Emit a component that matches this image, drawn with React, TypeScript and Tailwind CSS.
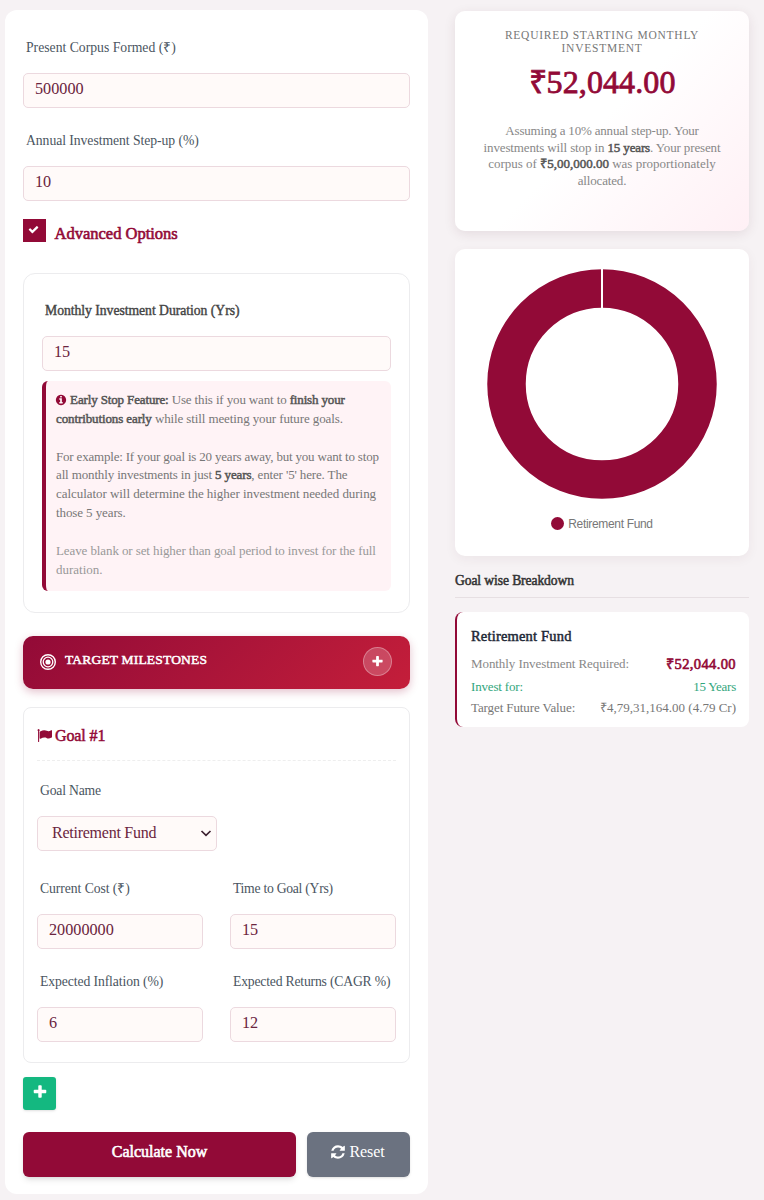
import React from 'react'
import { useState } from 'react'

const Icon = ({ d, className }: { d: string; className: string }) => (
  <svg viewBox="0 0 1792 1792" fill="currentColor" className={className}>
    <path d={d} />
  </svg>
)

const plus = 'M1600 736v192q0 40-28 68t-68 28h-416v416q0 40-28 68t-68 28h-192q-40 0-68-28t-28-68v-416h-416q-40 0-68-28t-28-68v-192q0-40 28-68t68-28h416v-416q0-40 28-68t68-28h192q40 0 68 28t28 68v416h416q40 0 68 28t28 68z'
const check = 'M1671 566q0 40-28 68l-724 724-136 136q-28 28-68 28t-68-28l-136-136-362-362q-28-28-28-68t28-68l136-136q28-28 68-28t68 28l294 295 656-657q28-28 68-28t68 28l136 136q28 28 28 68z'
const info = 'M1152 1376v-160q0-14-9-23t-23-9h-96v-512q0-14-9-23t-23-9h-320q-14 0-23 9t-9 23v160q0 14 9 23t23 9h96v320h-96q-14 0-23 9t-9 23v160q0 14 9 23t23 9h448q14 0 23-9t9-23zm-128-896v-160q0-14-9-23t-23-9h-192q-14 0-23 9t-9 23v160q0 14 9 23t23 9h192q14 0 23-9t9-23zm640 416q0 209-103 385.5t-279.5 279.5-385.5 103-385.5-103-279.5-279.5-103-385.5 103-385.5 279.5-279.5 385.5-103 385.5 103 279.5 279.5 103 385.5z'
const flag = 'M320 256q0 72-64 110v1266q0 13-9.5 22.5t-22.5 9.5h-64q-13 0-22.5-9.5t-9.5-22.5v-1266q-64-38-64-110 0-53 37.5-90.5t90.5-37.5 90.5 37.5 37.5 90.5zm1472 64v763q0 25-12.5 38.5t-39.5 27.5q-215 116-369 116-61 0-123.5-22t-108.5-48-115.5-48-142.5-22q-192 0-464 146-17 9-33 9-26 0-45-19t-19-45v-742q0-32 31-55 21-14 79-43 236-120 421-120 107 0 200 29t219 88q38 19 88 19 54 0 117.5-21t110-47 88-47 54.5-21q26 0 45 19t19 45z'
const refresh = 'M1639 1056q0 5-1 7-64 268-268 434.5t-478 166.5q-146 0-282.5-55t-243.5-157l-129 129q-19 19-45 19t-45-19-19-45v-448q0-26 19-45t45-19h448q26 0 45 19t19 45-19 45l-137 137q71 66 161 102t187 36q134 0 250-65t186-179q11-17 53-117 8-23 30-23h192q13 0 22.5 9.5t9.5 22.5zm25-800v448q0 26-19 45t-45 19h-448q-26 0-45-19t-19-45 19-45l138-138q-148-137-349-137-134 0-250 65t-186 179q-11 17-53 117-8 23-30 23h-199q-13 0-22.5-9.5t-9.5-22.5v-7q65-268 270-434.5t480-166.5q146 0 284 55.5t245 156.5l130-129q19-19 45-19t45 19 19 45z'

const Bullseye = () => (
  <svg viewBox="0 0 16 16" className="size-4" fill="none" stroke="currentColor">
    <circle cx="8" cy="8" r="7.3" strokeWidth="1.4" />
    <circle cx="8" cy="8" r="4.8" strokeWidth="1.3" />
    <circle cx="8" cy="8" r="2.6" fill="currentColor" stroke="none" />
  </svg>
)

// bold without changing the letter widths
const B = ({ children }: { children: React.ReactNode }) => (
  <b className="font-normal text-[#555] [-webkit-text-stroke:0.5px_#555]">{children}</b>
)

const Field = ({ label, start, className = 'text-[#4a5561]' }: { label: string; start: string; className?: string }) => {
  const [value, setValue] = useState(start)
  return (
    <label className="block">
      <span className={`block h-5 pl-[3px] text-[13.7px] leading-[21px] whitespace-nowrap ${className}`}>{label}</span>
      <input
        value={value}
        onChange={(e) => setValue(e.target.value)}
        className="mt-4 block h-[35px] w-full rounded-[5px] border border-[#ecd9df] bg-[#fffaf9] px-[11px] pb-[2px] text-[16.2px] text-[#6b2540]"
      />
    </label>
  )
}

const Advanced = () => (
  <section className="mt-[30px] h-[340px] rounded-xl border border-[#ececee] px-[18px] pt-[26px]">
    <Field label="Monthly Investment Duration (Yrs)" start="15" className="tracking-[-0.04px] text-[#444] [-webkit-text-stroke:0.4px_#444]" />
    <div className="mt-[10px] h-[210px] rounded-md border-l-4 border-[#920a37] bg-[#fff3f6] pt-[10px] pl-[10px] text-[13px] leading-[18.85px] whitespace-nowrap text-[#777]">
      <p className="tracking-[-0.14px]"><Icon d={info} className="-mt-[2px] -ml-px inline size-3 text-[#920a37]" /><B> Early Stop Feature:</B> Use this if you want to <B>finish your</B></p>
      <p className="tracking-[-0.11px]"><B>contributions early</B> while still meeting your future goals.</p>
      <br />
      <p className="tracking-[-0.19px]">For example: If your goal is 20 years away, but you want to stop</p>
      <p className="tracking-[-0.14px]">all monthly investments in just <B>5 years</B>, enter '5' here. The</p>
      <p className="tracking-[-0.05px]">calculator will determine the higher investment needed during</p>
      <p className="tracking-[-0.1px]">those 5 years.</p>
      <br />
      <p className="tracking-[-0.1px] text-[#999]">Leave blank or set higher than goal period to invest for the full</p>
      <p className="text-[#999]">duration.</p>
    </div>
  </section>
)

const Goal = () => (
  <section className="mt-[18px] h-[356px] rounded-lg border border-[#ececee] px-[13px]">
    <h3 className="flex h-[53px] items-center gap-[3px] border-b border-dashed border-[#eee] pt-[3px] text-[16px] tracking-[-0.1px] text-[#920a37] [-webkit-text-stroke:0.5px]">
      <Icon d={flag} className="size-[15px]" />
      <span>Goal #1</span>
    </h3>
    <div className="mt-[19px] h-5 pl-[3px] text-[13.7px] leading-[21px] tracking-[-0.2px] text-[#4a5561]">Goal Name</div>
    <div className="mt-4 flex h-[35px] w-[180px] items-center justify-between rounded-[5px] border border-[#ecd9df] bg-[#fffaf9] pr-[4px] pb-px pl-[14px] text-[16px] tracking-[-0.25px] text-[#6b2540]">
      <span>Retirement Fund</span>
      <svg viewBox="0 0 12 12" className="size-3" fill="none" stroke="#3c2030" strokeWidth="1.7"><path d="M1.500 4l4.500 4.300L10.500 4" /></svg>
    </div>
    <div className="mt-[27px] grid grid-cols-2 gap-x-[27px] gap-y-[22px]">
      <Field label="Current Cost (₹)" start="20000000" className="tracking-[-0.07px] text-[#4a5561]" />
      <Field label="Time to Goal (Yrs)" start="15" className="tracking-[-0.28px] text-[#4a5561]" />
      <Field label="Expected Inflation (%)" start="6" className="tracking-[-0.1px] text-[#4a5561]" />
      <Field label="Expected Returns (CAGR %)" start="12" className="tracking-[-0.2px] text-[#4a5561]" />
    </div>
  </section>
)

const Summary = () => (
  <section className="h-[220px] rounded-[10px] bg-linear-135 from-white from-50% to-[#fff0f5] pt-[18px] text-center whitespace-nowrap shadow-[0_3px_12px_rgba(80,30,50,0.10)]">
    <div className="text-[11.5px] leading-[12.5px] tracking-[0.75px] text-[#777]">
      <p>REQUIRED STARTING MONTHLY</p>
      <p>INVESTMENT</p>
    </div>
    <p className="mt-[10px] text-[32px] leading-9 tracking-[0.1px] text-[#920a37] [-webkit-text-stroke:0.8px]">₹52,044.00</p>
    <div className="mt-[23px] text-[13px] leading-[16.5px] text-[#888]">
      <p className="tracking-[-0.18px]">Assuming a 10% annual step-up. Your</p>
      <p className="tracking-[-0.13px]">investments will stop in <B>15 years</B>. Your present</p>
      <p>corpus of <B>₹5,00,000.00</B> was proportionately</p>
      <p className="tracking-[-0.15px]">allocated.</p>
    </div>
  </section>
)

const Chart = () => (
  <section className="mt-[18px] h-[307px] rounded-[10px] bg-white pt-[19.5px] shadow-[0_3px_12px_rgba(80,30,50,0.06)]">
    <svg viewBox="0 0 230 230" className="mx-auto size-[230px]">
      <circle cx="115" cy="115" r="95.500" fill="none" stroke="#920a37" strokeWidth="38.500" />
      <path d="M115 0v40" stroke="#fff" strokeWidth="2" />
    </svg>
    <div className="mt-[17px] flex items-center justify-center gap-[4px] font-['Liberation_Sans'] text-[12px] leading-4 tracking-[-0.33px] text-[#777]">
      <span className="size-[13px] rounded-full bg-[#920a37]" />
      <span>Retirement Fund</span>
    </div>
  </section>
)

const Breakdown = () => (
  <section className="whitespace-nowrap">
    <h2 className="mt-[14px] h-[28px] border-b border-[#e6dfe2] pt-px text-[13.6px] leading-5 tracking-[-0.1px] text-[#333] [-webkit-text-stroke:0.5px]">Goal wise Breakdown</h2>
    <div className="mt-[14px] h-[115px] rounded-lg border-l-[2.5px] border-[#920a37] bg-white pt-[14px] pr-[13px] pl-[14px] text-[13px]">
      <h3 className="text-[14.500px] leading-5 tracking-[0.18px] text-[#1f2937] [-webkit-text-stroke:0.5px]">Retirement Fund</h3>
      <div className="mt-[6px] flex h-[24px] items-center justify-between text-[#888]">
        <span className="tracking-[-0.08px]">Monthly Investment Required:</span>
        <span className="pt-[2px] text-[14.500px] tracking-[0.38px] text-[#920a37] [-webkit-text-stroke:0.6px]">₹52,044.00</span>
      </div>
      <div className="flex h-[22px] items-center justify-between text-[#32a67d]">
        <span className="tracking-[-0.18px]">Invest for:</span>
        <span className="tracking-[-0.25px]">15 Years</span>
      </div>
      <div className="flex h-[20px] items-center justify-between text-[#777]">
        <span className="tracking-[-0.1px]">Target Future Value:</span>
        <span>₹4,79,31,164.00 (4.79 Cr)</span>
      </div>
    </div>
  </section>
)

const App = () => {
  const [on, setOn] = useState(true)

  return (
    <div className="flex h-[1200px] w-[764px] items-start gap-[27px] overflow-hidden bg-[#f6f2f4] pt-[10px] pl-[5px] font-['Liberation_Serif',serif]">
      <main className="h-[1184px] w-[423px] rounded-xl bg-white px-[18px] pt-[27px]">
        <div className="flex flex-col gap-[22px]">
          <Field label="Present Corpus Formed (₹)" start="500000" />
          <Field label="Annual Investment Step-up (%)" start="10" className="tracking-[-0.06px] text-[#4a5561]" />
        </div>
        <div className="mt-[18px] flex h-[24px] gap-[8.5px]">
          <button onClick={() => setOn(!on)} className="flex size-[23px] items-start justify-center bg-[#920a37] pt-[5px] pr-[2px] text-white">
            {on && <Icon d={check} className="size-[11px]" />}
          </button>
          <span className="pt-[5px] text-[16.500px] leading-5 text-[#920a37] [-webkit-text-stroke:0.6px]">Advanced Options</span>
        </div>
        <Advanced />
        <div className="mt-[23px] flex h-[53px] items-center justify-between rounded-[10px] bg-linear-135 from-[#920a37] to-[#c41e3a] pr-[18px] pb-[2px] pl-[17px] text-white shadow-[0_3px_8px_rgba(146,10,55,0.25)]">
          <span className="flex items-center gap-[9px] text-[13.500px] tracking-[0.18px] [-webkit-text-stroke:0.5px]">
            <Bullseye />
            <span className="pb-[2px]">TARGET MILESTONES</span>
          </span>
          <span className="flex size-[29px] items-center justify-center rounded-full border border-white/30 bg-white/20 pb-px">
            <Icon d={plus} className="size-[13px]" />
          </span>
        </div>
        <Goal />
        <button className="mt-[14px] flex h-[33px] w-[33px] justify-center rounded-[3px] bg-[#14b880] pt-[7px] text-white shadow-sm">
          <Icon d={plus} className="size-4" />
        </button>
        <div className="mt-[22px] flex gap-[11px]">
          <button className="h-[45px] w-[273px] rounded-md bg-[#920a37] pb-[5px] text-[16px] text-white shadow-md [-webkit-text-stroke:0.6px]">Calculate Now</button>
          <button className="flex h-[45px] w-[103px] items-center justify-center gap-[3px] rounded-md bg-[#6b7280] pr-[2px] pb-[5px] text-[16px] tracking-[-0.1px] text-white shadow-sm">
            <Icon d={refresh} className="size-4" />
            Reset
          </button>
        </div>
      </main>
      <aside className="w-[294px] pt-px">
        <Summary />
        <Chart />
        <Breakdown />
      </aside>
    </div>
  )
}

export default App
